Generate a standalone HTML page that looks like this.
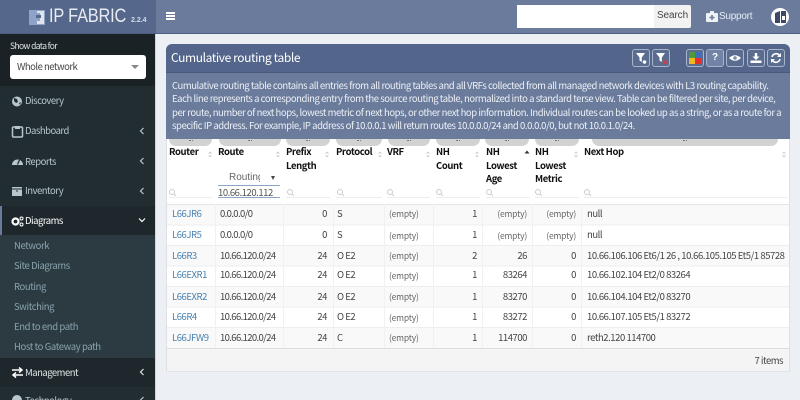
<!DOCTYPE html>
<html><head><meta charset="utf-8"><style>
*{box-sizing:border-box}
html,body{margin:0;padding:0;width:800px;height:400px;overflow:hidden;background:#ecf0f5}
body{font-family:"Noto Sans CJK JP","Liberation Sans",sans-serif;font-size:9.5px;letter-spacing:-.45px;color:#444;position:relative}
.a{position:absolute;white-space:nowrap;line-height:14px}
.r{text-align:right}
.m{color:#b8c7ce;font-size:9.5px;letter-spacing:-.5px;left:25px}
.s{color:#8aa4af;font-size:9.5px;letter-spacing:-.4px;left:14px}
.ch{position:absolute;left:138px;width:8px;height:8px}
.i{position:absolute;left:11px;width:13px;height:13px}
.h{color:#111;font-weight:700;font-size:9.5px;letter-spacing:-.4px;line-height:13.7px;position:absolute;white-space:nowrap}
.hb{position:absolute;top:139px;height:7px;background:#d2d2d2;border-radius:0 0 7px 7px}
.hb:after{content:"";position:absolute;left:50%;top:1px;width:4px;height:1px;margin-left:-2px;border-top:1px dotted #777}
.f{position:absolute;top:197px;height:1px;background:#eeeeee}
.btn{position:absolute;top:49px;width:18px;height:18px;border:1px solid #a9b5ca;border-radius:3px;background:#5a6c8f}
.l{color:#4a80b0;left:172px}.c2{left:220px;letter-spacing:-.63px}.c3{right:473px}.c4{left:337px}.c5{left:389px;font-size:8.5px;letter-spacing:-.2px;color:#666}.c6{right:323px}.c7{right:273px}.c8{right:224px}.c9{left:587px}.e{font-size:8.5px;letter-spacing:-.2px;color:#666}
</style></head><body>
<div class="a" style="left:0;top:0;width:156px;height:33px;background:#55678a"></div>
<div class="a" style="left:156px;top:0;width:644px;height:33px;background:#6a7b9c"></div>
<div class="a" style="left:0;top:33px;width:800px;height:1px;background:#4d5e80"></div>
<svg class="a" style="left:29px;top:10px" width="16" height="15" viewBox="0 0 16 15"><rect width="16" height="15" fill="#8ea3c8"/><path d="M8 1h7v13H8v-3h3V8H7V5h4V3H8z" fill="#dfe4ec"/><path d="M7 5h5v3H7z" fill="#55678a"/></svg>
<div class="a" style="left:49px;top:6px;font-family:'Liberation Sans',sans-serif;font-size:19px;line-height:22px;color:#e8ecf2;letter-spacing:-.2px;transform:scaleX(.86);transform-origin:0 0">IP FABRIC</div>
<div class="a" style="left:131px;top:15px;font-family:'Liberation Sans',sans-serif;font-size:7px;letter-spacing:0;line-height:12px;font-weight:700;color:#d5dbe6">2.2.4</div>
<div class="a" style="left:166px;top:12px;width:9px;height:2px;background:#fff;box-shadow:0 3px 0 #fff,0 6px 0 #fff"></div>
<div class="a" style="left:517px;top:5px;width:137px;height:23px;background:#fff"></div>
<div class="a" style="left:654px;top:5px;width:37px;height:23px;background:#f2f2f2;border-radius:0 2px 2px 0;text-align:center;line-height:22px;font-family:'Liberation Sans',sans-serif;font-size:10px;letter-spacing:-.1px;color:#444">Search</div>
<svg class="a" style="left:706px;top:11px" width="12" height="11" viewBox="0 0 12 11"><path d="M4 2V0h4v2h3a1 1 0 0 1 1 1v7a1 1 0 0 1-1 1H1a1 1 0 0 1-1-1V3a1 1 0 0 1 1-1z" fill="#eef1f5"/><path d="M5.2 4h1.600v1.700h1.700v1.500H6.800v1.700H5.200V7.200H3.500V5.700h1.700z" fill="#6a7b9c"/></svg>
<div class="a" style="left:719px;top:10px;color:#e8ecf2;font-family:'Liberation Sans',sans-serif;font-size:10px;letter-spacing:-.25px">Support</div>
<div class="a" style="left:771px;top:8px;width:18px;height:18px;border-radius:50%;background:#fff"></div>
<svg class="a" style="left:775px;top:11px" width="11" height="12" viewBox="0 0 11 12"><path d="M0 2l5-2v12H0z" fill="#3b4a66"/><path d="M6 0h5v12H6z" fill="#3b4a66"/><path d="M7 5h3v4H7z" fill="#fff"/></svg>

<div class="a" style="left:0;top:34px;width:155px;height:366px;background:#222d32"></div>
<div class="a" style="left:155px;top:34px;width:1px;height:366px;background:#cfd5de"></div>
<div class="a" style="left:0;top:34px;width:155px;height:52px;background:#1a2226"></div>
<div class="a" style="left:10px;top:39px;color:#dfe5e8;font-size:8.5px;letter-spacing:-.6px">Show data for</div>
<div class="a" style="left:10px;top:55px;width:136px;height:24px;background:#fff;border-radius:3px;color:#444;font-size:9.5px;letter-spacing:-.5px;padding:4px 7px">Whole network</div>
<div class="a" style="left:131px;top:65px;border:4px solid transparent;border-top:4px solid #888;border-bottom:0"></div>

<div class="a" style="left:0;top:206px;width:155px;height:29px;background:#1e282c"></div>
<div class="a" style="left:0;top:206px;width:2px;height:29px;background:#6a7b9c"></div>
<div class="a" style="left:0;top:235px;width:155px;height:123px;background:#2c3b41"></div>
<div class="a" style="left:0;top:358px;width:155px;height:29px;background:#1e282c"></div>

<svg class="i" style="top:95px" viewBox="0 0 13 13"><circle cx="6" cy="6.500" r="5" fill="#b8c7ce"/><path d="M3 3l3 1 1 3-2 1-2-2zM8 8l2-1-1 3z" fill="#222d32"/></svg>
<div class="a m" style="top:93px">Discovery</div>
<svg class="i" style="top:125px" viewBox="0 0 13 13"><rect x="1.500" y="2" width="10" height="10" rx="1" fill="none" stroke="#b8c7ce" stroke-width="1.500"/><rect x="4" y="1" width="5" height="3" fill="#b8c7ce"/></svg>
<div class="a m" style="top:123px">Dashboard</div>
<svg class="i" style="top:155px" viewBox="0 0 13 13"><path d="M1 10a5.500 5.500 0 1 1 11 0z" fill="#b8c7ce"/><path d="M6.500 9.500L8.500 5" stroke="#222d32" stroke-width="1.300"/></svg>
<div class="a m" style="top:154px">Reports</div>
<svg class="i" style="top:185px" viewBox="0 0 13 13"><rect x="1" y="2" width="10" height="9" fill="#b8c7ce"/><path d="M1 4h10" stroke="#222d32"/><path d="M5 5.500h2v1H5z" fill="#222d32"/></svg>
<div class="a m" style="top:183px">Inventory</div>
<svg class="i" style="top:215px" viewBox="0 0 13 13"><circle cx="4.500" cy="6.500" r="3" fill="none" stroke="#fff" stroke-width="2.200"/><circle cx="10.500" cy="3.500" r="1.500" fill="none" stroke="#fff"/><circle cx="10.500" cy="9.500" r="1.500" fill="none" stroke="#fff"/></svg>
<div class="a m" style="top:213px;color:#fff">Diagrams</div>
<div class="a s" style="top:238px">Network</div>
<div class="a s" style="top:258px">Site Diagrams</div>
<div class="a s" style="top:279px">Routing</div>
<div class="a s" style="top:299px">Switching</div>
<div class="a s" style="top:319px">End to end path</div>
<div class="a s" style="top:339px">Host to Gateway path</div>
<svg class="i" style="top:366px" viewBox="0 0 13 13"><path d="M1 4h9M8 1.500L11 4 8 6.500M12 9H3M5 6.500L2 9l3 2.500" fill="none" stroke="#fff" stroke-width="1.500"/></svg>
<div class="a m" style="top:365px;color:#dfe5e8">Management</div>
<svg class="i" style="top:394px" viewBox="0 0 13 13"><circle cx="6" cy="6" r="5" fill="#b8c7ce"/></svg>
<div class="a m" style="top:393px">Technology</div>
<svg class="ch" style="top:127px" viewBox="0 0 8 8"><path d="M5.500 1L2.500 4l3 3" fill="none" stroke="#b8c7ce" stroke-width="1.200"/></svg>
<svg class="ch" style="top:157px" viewBox="0 0 8 8"><path d="M5.500 1L2.500 4l3 3" fill="none" stroke="#b8c7ce" stroke-width="1.200"/></svg>
<svg class="ch" style="top:187px" viewBox="0 0 8 8"><path d="M5.500 1L2.500 4l3 3" fill="none" stroke="#b8c7ce" stroke-width="1.200"/></svg>
<svg class="ch" style="top:216px" viewBox="0 0 8 8"><path d="M1 2.500l3 3 3-3" fill="none" stroke="#fff" stroke-width="1.200"/></svg>
<svg class="ch" style="top:368px" viewBox="0 0 8 8"><path d="M5.500 1L2.500 4l3 3" fill="none" stroke="#dfe5e8" stroke-width="1.200"/></svg>
<svg class="ch" style="top:396px" viewBox="0 0 8 8"><path d="M5.500 1L2.500 4l3 3" fill="none" stroke="#b8c7ce" stroke-width="1.200"/></svg>

<div class="a" style="left:166px;top:44px;width:624px;height:328px;background:#fff;border:1px solid #dde1e7;border-top:0;border-radius:6px 6px 0 0"></div>
<div class="a" style="left:166px;top:44px;width:624px;height:29px;background:#53658a;border-radius:6px 6px 0 0"></div>
<div class="a" style="left:166px;top:72px;width:624px;height:1px;background:#4a5a7a"></div>
<div class="a" style="left:166px;top:73px;width:624px;height:66px;background:#6a7b9c"></div>
<div class="a" style="left:171px;top:50px;color:#fff;font-size:12px;letter-spacing:-.4px;line-height:16px">Cumulative routing table</div>
<div class="a" style="left:172px;top:78.500px;color:#eef1f6;font-size:9.5px;letter-spacing:-.44px;line-height:13.6px">Cumulative routing table contains all entries from all routing tables and all VRFs collected from all managed network devices with L3 routing capability.<br>Each line represents a corresponding entry from the source routing table, normalized into a standard terse view. Table can be filtered per site, per device,<br>per route, number of next hops, lowest metric of next hops, or other next hop information. Individual routes can be looked up as a string, or as a route for a<br>specific IP address. For example, IP address of 10.0.0.1 will return routes 10.0.0.0/24 and 0.0.0.0/0, but not 10.0.1.0/24.</div>

<div class="btn" style="left:632px"><svg width="16" height="16" viewBox="0 0 16 16" style="display:block"><path d="M3 3h9L8.800 7.500V12L6.500 10.500v-3z" fill="#fff"/><circle cx="11.500" cy="12" r="1.800" fill="#fff"/></svg></div>
<div class="btn" style="left:652px"><svg width="16" height="16" viewBox="0 0 16 16" style="display:block"><path d="M3 3h9L8.800 7.500V12L6.500 10.500v-3z" fill="#fff"/><path d="M10 10.500l3.500 3.500M13.500 10.500L10 14" stroke="#e33" stroke-width="1.400"/></svg></div>
<div class="btn" style="left:686px"><svg width="16" height="16" viewBox="0 0 16 16" style="display:block"><rect x="2" y="2" width="6" height="6" fill="#4d9a3c"/><rect x="8" y="2" width="6" height="6" fill="#3f6fb5"/><rect x="2" y="8" width="6" height="6" fill="#f0b820"/><rect x="8" y="8" width="6" height="6" fill="#e53030"/></svg></div>
<div class="btn" style="left:706px;background:#7183a6;text-align:center;color:#fff;font:700 10px/16px 'Liberation Sans',sans-serif;letter-spacing:0">?</div>
<div class="btn" style="left:726px"><svg width="16" height="16" viewBox="0 0 16 16" style="display:block"><path d="M2 8Q8 2.500 14 8 8 13.500 2 8z" fill="#fff"/><circle cx="8" cy="8" r="1.800" fill="#7d8ca8"/></svg></div>
<div class="btn" style="left:747px"><svg width="16" height="16" viewBox="0 0 16 16" style="display:block"><path d="M6.800 3h2.400v3.500h2.300L8 10 4.500 6.500h2.300z" fill="#fff"/><path d="M2.500 10.500h11V13h-11z" fill="#fff"/></svg></div>
<div class="btn" style="left:767px"><svg width="16" height="16" viewBox="0 0 16 16" style="display:block"><path d="M4 7A4.200 4.200 0 0 1 11.500 5.500M12 9A4.200 4.200 0 0 1 4.500 10.500" fill="none" stroke="#fff" stroke-width="1.600"/><path d="M13 3v4H9zM3 13V9h4z" fill="#fff"/></svg></div>

<div class="hb" style="left:169px;width:43px"></div><div class="hb" style="left:219px;width:62px"></div><div class="hb" style="left:286px;width:44px"></div><div class="hb" style="left:336px;width:46px"></div><div class="hb" style="left:388px;width:42px"></div><div class="hb" style="left:436px;width:44px"></div><div class="hb" style="left:485px;width:44px"></div><div class="hb" style="left:535px;width:44px"></div><div class="hb" style="left:592px;width:186px"></div>

<div class="h" style="left:169px;top:145px">Router</div>
<div class="h" style="left:218px;top:145px">Route</div>
<div class="h" style="left:286px;top:145px">Prefix<br>Length</div>
<div class="h" style="left:336px;top:145px">Protocol</div>
<div class="h" style="left:387px;top:145px">VRF</div>
<div class="h" style="left:436px;top:145px">NH<br>Count</div>
<div class="h" style="left:486px;top:145px">NH<br>Lowest<br>Age</div>
<div class="h" style="left:535px;top:145px">NH<br>Lowest<br>Metric</div>
<div class="h" style="left:584px;top:145px">Next Hop</div>

<div class="a" style="left:229px;top:171px;color:#666;font-family:'Liberation Sans',sans-serif;font-size:10px;letter-spacing:0;width:31px;overflow:hidden">Routing</div>
<div class="a" style="left:271px;top:176px;border:2.500px solid transparent;border-top:4px solid #444;border-bottom:0"></div>
<div class="a" style="left:218px;top:185px;width:62px;height:1px;background:#8ea3c8"></div>
<div class="a" style="left:218px;top:186px;color:#555;font-size:9.5px;letter-spacing:-.45px;line-height:12px">10.66.120.112</div>
<div class="a" style="left:218px;top:197px;width:62px;height:1px;background:#8ea3c8"></div>

<div class="f" style="left:169px;width:43px"></div><div class="f" style="left:286px;width:44px"></div><div class="f" style="left:336px;width:46px"></div><div class="f" style="left:387px;width:43px"></div><div class="f" style="left:436px;width:44px"></div><div class="f" style="left:486px;width:44px"></div><div class="f" style="left:535px;width:44px"></div><div class="f" style="left:584px;width:203px"></div>

<svg width="800" height="400" class="a" style="left:0;top:0;pointer-events:none" viewBox="0 0 800 400" fill="none" stroke="#ccc"><g><circle cx="172" cy="192" r="2.500"/><path d="M174 194l2 2"/><circle cx="290" cy="192" r="2.500"/><path d="M292 194l2 2"/><circle cx="340" cy="192" r="2.500"/><path d="M342 194l2 2"/><circle cx="390" cy="192" r="2.500"/><path d="M392 194l2 2"/><circle cx="439" cy="192" r="2.500"/><path d="M441 194l2 2"/><circle cx="489" cy="192" r="2.500"/><path d="M491 194l2 2"/><circle cx="538" cy="192" r="2.500"/><path d="M540 194l2 2"/><circle cx="587" cy="192" r="2.500"/><path d="M589 194l2 2"/></g><g fill="#ccc" stroke="none"><path d="M210 151.500l2 2h-4zM210 157.500l2-2h-4zM278 151.500l2 2h-4zM278 157.500l2-2h-4zM327 151.500l2 2h-4zM327 157.500l2-2h-4zM380 151.500l2 2h-4zM380 157.500l2-2h-4zM428 151.500l2 2h-4zM428 157.500l2-2h-4zM477 151.500l2 2h-4zM477 157.500l2-2h-4zM576 151.500l2 2h-4zM576 157.500l2-2h-4zM784 151.500l2 2h-4zM784 157.500l2-2h-4z"/><path d="M527 150.500l2.500 3h-5z" fill="#333"/></g></svg>

<div class="a" style="left:167px;top:204px;width:622px;height:21px;background:#f9f9f9"></div>
<div class="a" style="left:167px;top:245px;width:622px;height:21px;background:#f9f9f9"></div>
<div class="a" style="left:167px;top:286px;width:622px;height:21px;background:#f9f9f9"></div>
<div class="a" style="left:167px;top:327px;width:622px;height:21px;background:#f9f9f9"></div>
<div class="a" style="left:167px;top:204px;width:622px;height:1px;background:#e4e4e4;box-shadow:0 20.500px 0 #eee,0 41px 0 #eee,0 61.500px 0 #eee,0 82px 0 #eee,0 102.500px 0 #eee,0 123px 0 #eee,0 144px 0 #ddd"></div>
<svg class="a" style="left:0;top:0" width="800" height="400" viewBox="0 0 800 400"><path d="M215.500 204v144M283.500 204v144M333.500 204v144M384.500 204v144M433.500 204v144M482.500 204v144M532.500 204v144M581.500 204v144" stroke="#f1f1f1"/></svg>
<div class="a" style="left:167px;top:349px;width:622px;height:22px;background:#f4f4f4"></div>
<div class="a" style="left:166px;top:371px;width:624px;height:1px;background:#e0e3e8"></div>
<div class="a r" style="right:17px;top:353px;color:#444;font-size:9.5px;letter-spacing:-.5px">7 items</div>

<div class="a l" style="top:206px">L66JR6</div><div class="a c2" style="top:206px">0.0.0.0/0</div><div class="a c3 r" style="top:206px">0</div><div class="a c4" style="top:206px">S</div><div class="a c5" style="top:207px">(empty)</div><div class="a c6 r" style="top:206px">1</div><div class="a c7 r e" style="top:207px">(empty)</div><div class="a c8 r e" style="top:207px">(empty)</div><div class="a c9" style="top:206px">null</div>
<div class="a l" style="top:227px">L66JR5</div><div class="a c2" style="top:227px">0.0.0.0/0</div><div class="a c3 r" style="top:227px">0</div><div class="a c4" style="top:227px">S</div><div class="a c5" style="top:229px">(empty)</div><div class="a c6 r" style="top:227px">1</div><div class="a c7 r e" style="top:229px">(empty)</div><div class="a c8 r e" style="top:229px">(empty)</div><div class="a c9" style="top:227px">null</div>
<div class="a l" style="top:248px">L66R3</div><div class="a c2" style="top:248px">10.66.120.0/24</div><div class="a c3 r" style="top:248px">24</div><div class="a c4" style="top:248px">O E2</div><div class="a c5" style="top:249px">(empty)</div><div class="a c6 r" style="top:248px">2</div><div class="a c7 r" style="top:248px">26</div><div class="a c8 r" style="top:248px">0</div><div class="a c9" style="top:248px">10.66.106.106 Et6/1 26 , 10.66.105.105 Et5/1 85728</div>
<div class="a l" style="top:267px">L66EXR1</div><div class="a c2" style="top:267px">10.66.120.0/24</div><div class="a c3 r" style="top:267px">24</div><div class="a c4" style="top:267px">O E2</div><div class="a c5" style="top:269px">(empty)</div><div class="a c6 r" style="top:267px">1</div><div class="a c7 r" style="top:267px">83264</div><div class="a c8 r" style="top:267px">0</div><div class="a c9" style="top:267px">10.66.102.104 Et2/0 83264</div>
<div class="a l" style="top:289px">L66EXR2</div><div class="a c2" style="top:289px">10.66.120.0/24</div><div class="a c3 r" style="top:289px">24</div><div class="a c4" style="top:289px">O E2</div><div class="a c5" style="top:290px">(empty)</div><div class="a c6 r" style="top:289px">1</div><div class="a c7 r" style="top:289px">83270</div><div class="a c8 r" style="top:289px">0</div><div class="a c9" style="top:289px">10.66.104.104 Et2/0 83270</div>
<div class="a l" style="top:309px">L66R4</div><div class="a c2" style="top:309px">10.66.120.0/24</div><div class="a c3 r" style="top:309px">24</div><div class="a c4" style="top:309px">O E2</div><div class="a c5" style="top:311px">(empty)</div><div class="a c6 r" style="top:309px">1</div><div class="a c7 r" style="top:309px">83272</div><div class="a c8 r" style="top:309px">0</div><div class="a c9" style="top:309px">10.66.107.105 Et5/1 83272</div>
<div class="a l" style="top:330px">L66JFW9</div><div class="a c2" style="top:330px">10.66.120.0/24</div><div class="a c3 r" style="top:330px">24</div><div class="a c4" style="top:330px">C</div><div class="a c5" style="top:331px">(empty)</div><div class="a c6 r" style="top:330px">1</div><div class="a c7 r" style="top:330px">114700</div><div class="a c8 r" style="top:330px">0</div><div class="a c9" style="top:330px">reth2.120 114700</div>
</body></html>
